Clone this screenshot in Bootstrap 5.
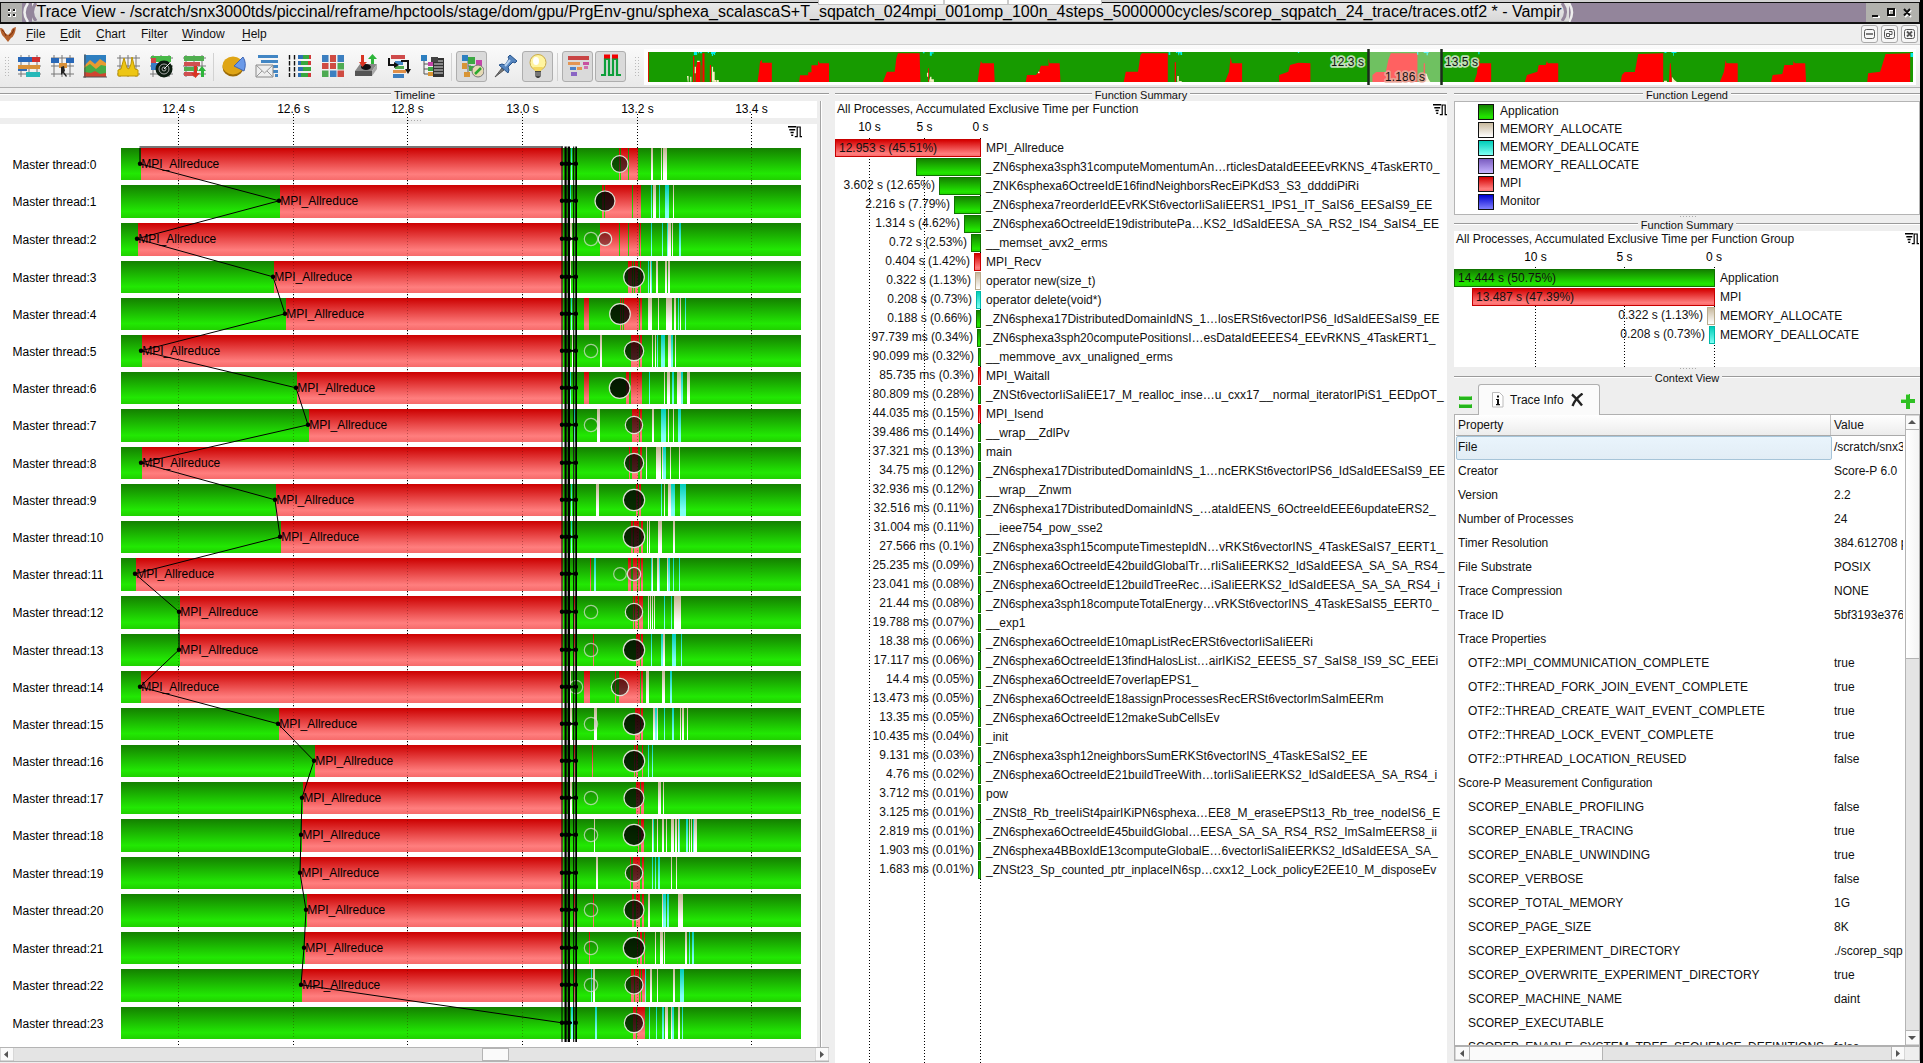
<!DOCTYPE html>
<html lang="en">
<head>
<meta charset="utf-8">
<title>Trace View - Vampir</title>
<link href="https://cdn.jsdelivr.net/npm/bootstrap@5.3.0/dist/css/bootstrap.min.css" rel="stylesheet">
<script src="https://cdn.jsdelivr.net/npm/bootstrap@5.3.0/dist/js/bootstrap.bundle.min.js"></script>
<style>
body{width:1923px;height:1063px;overflow:hidden;background:#000;font-family:"Liberation Sans",Arial,sans-serif;font-size:12px;line-height:14px;color:#111}
svg{display:block;flex:none}
.app{width:1920px;height:1063px;background:#eee}
.edge{height:3px;background:#d2d2d2;border-bottom:1px solid #111;position:relative}
.edge i{position:absolute;left:818px;top:0;width:284px;height:5px;background:linear-gradient(90deg,#fff 0 124px,#ccc 124px 126px,#fff 126px 188px,#ccc 188px 190px,#fff 190px);border:1px solid #c2c2c2;border-top:0;z-index:2}
.wtitle{height:21px;background:#93859b;border-bottom:2px solid #111;border-right:1px solid #111;border-left:1px solid #111}
.wtext{width:1537px;background:linear-gradient(#e9e9e9,#d8d8d8);font-size:16px;line-height:18px;white-space:nowrap;border-bottom:1px solid #b6b6b6}
.wbtn{background:#b1b1ad}
.menub{height:21px;border-bottom:1px solid #cfcfcf}
.menub u{text-underline-offset:2px}
.mdi{width:17px;height:18px;border:1px solid #aaa;border-radius:3px;background:#f6f6f6}
.tools{height:43px;padding-top:1px;background:linear-gradient(#fbfbfb,#e9e9e9);border-bottom:1px solid #b0b0b0}
.tb{width:33px;height:32px}
.tb.on div{border:1px solid #aeaeae;border-radius:3px;background:#dadada}
.tb div{width:31px;height:31px;border:1px solid transparent}
.vsep{width:1px;height:28px;background:#d2d2d2;margin:0 3px}
.ptitle{height:13px;font-size:11px;line-height:13px;gap:3px;padding-top:2px}
.ptitle:before,.ptitle:after{content:"";flex:1;height:2px;background:#9a9a9a;border-bottom:1px solid #fff;margin-top:-4px}
.sb{background:#e4e4e4}
.sbt{background:#fafafa;border:1px solid #b4b4b4}
.frow{height:19px}
.fname{padding-left:5px;white-space:nowrap;line-height:18px}
.bar{height:18px;border:1px solid;flex:none}
.val{line-height:16px;white-space:nowrap;margin-right:4px}
.cg{background:linear-gradient(#148200,#22e600 85%,#20d400);border-color:#0f7300}
.cr{background:linear-gradient(#d40000,#ff7d7d 85%,#fa6c6c);border-color:#c80000}
.cb{background:linear-gradient(#c8b99d,#fff);border-color:#b9aa8c}
.cc{background:linear-gradient(#00cdb9,#80fff4);border-color:#00b9a8}
.cp{background:linear-gradient(#7a5cc0,#c6b4ff);border-color:#6a50b0}
.cm{background:linear-gradient(#0000d0,#8080ff);border-color:#0000c0}
.lgb{height:114px;border:1px solid #b4b4b4;background:#fff}
.sw{width:16px;height:16px;border:1px solid;margin-right:6px}
.dots{position:absolute;top:0;bottom:0;width:1px;background:repeating-linear-gradient(#000 0 1px,transparent 1px 3px);z-index:0}
.prow{height:24px;line-height:23px;white-space:nowrap}
.pcell{width:376px;padding-left:2px}
.vcell{width:71px;overflow:hidden;padding-left:2px}
.sel{background:linear-gradient(#e9f4fc,#e2edf5);border:1px solid #a6c4d8;border-radius:2px;line-height:21px;padding-left:1px}
.over{position:relative;z-index:1}
.over .bar{opacity:.999}
</style>
</head>
<body>
<div class="app d-flex flex-column">
 <div class="edge flex-shrink-0"><i></i></div>
 <div class="wtitle d-flex flex-shrink-0">
  <div class="wbtn d-flex align-items-center justify-content-center" style="width:21px"><svg width="8" height="8"><path d="M0 0h3v3H0zM5 0h3v3H5zM0 5h3v3H0zM5 5h3v3H5z" fill="#fff"/><path d="M0 0h2v2H0zM5 0h2v2H5zM0 5h2v2H0zM5 5h2v2H5z" fill="#111"/></svg></div>
  <svg width="10" height="19"><path d="M6 0Q-1 9.500 6 19" fill="none" stroke="#eee" stroke-width="2.500"/></svg>
  <div class="wtext d-flex"><svg width="1537" height="18"><path d="M4 0Q-3 9 4 18" fill="none" stroke="#93859b" stroke-width="3"/><text x="4.500" y="14" font-size="16" textLength="1525" lengthAdjust="spacingAndGlyphs">Trace View - /scratch/snx3000tds/piccinal/reframe/hpctools/stage/dom/gpu/PrgEnv-gnu/sphexa_scalascaS+T_sqpatch_024mpi_001omp_100n_4steps_5000000cycles/scorep_sqpatch_24_trace/traces.otf2 * - Vampir</text><path d="M1530 0Q1537 9 1530 18" fill="none" stroke="#93859b" stroke-width="3"/></svg></div>
  <svg width="8" height="19"><path d="M0 0Q6 9.500 0 19" fill="none" stroke="#eee" stroke-width="2.500"/></svg>
  <div class="wbtn ms-auto" style="width:53px"><svg width="53" height="19" fill="none" stroke="#fff" stroke-width="2"><path d="M7 14h7M23 7h6v6h-6zM39 7l6 7m0-7l-6 7"/><g stroke="#111"><path d="M6 13h6M22 6h6v6h-6zM38 6l6 6.500m0-6.500l-6 6.500"/></g></svg></div>
 </div>
 <div class="menub d-flex align-items-center flex-shrink-0">
  <svg width="17" height="16"><path d="M0 2q4 0 5 5l3 2 3-3q0-4 5-5-1 9-5 11l-3 4-4-5Q1 9 0 2" fill="#b4602c"/><path d="M2 4q3 2 4 6M14 3q-1 5-5 7" stroke="#783010" fill="none"/></svg>
  <span style="width:34px;padding-left:9px"><u>F</u>ile</span><span style="width:37px;padding-left:9px"><u>E</u>dit</span><span style="width:44px;padding-left:8px"><u>C</u>hart</span><span style="width:42px;padding-left:9px">F<u>i</u>lter</span><span style="width:56px;padding-left:8px"><u>W</u>indow</span><span class="ps-2 ms-1"><u>H</u>elp</span>
  <div class="ms-auto d-flex" style="margin-right:2px;gap:3px">
   <div class="mdi"><svg width="15" height="16" fill="none" stroke="#555"><rect x="2.500" y="3.500" width="10" height="9" rx="2"/><path d="M4 8h7" stroke-width="1.500"/></svg></div>
   <div class="mdi"><svg width="15" height="16" fill="none" stroke="#555"><rect x="2.500" y="3.500" width="10" height="9" rx="2"/><path d="M4.500 7.500h3v3h-3zM7 5.500h3v3H8"/></svg></div>
   <div class="mdi"><svg width="15" height="16" fill="none" stroke="#555"><rect x="2.500" y="3.500" width="10" height="9" rx="2"/><path d="M5 5.500l5 5m0-5l-5 5" stroke-width="1.800"/></svg></div>
  </div>
 </div>
 <div class="tools d-flex align-items-center flex-shrink-0">
  <svg width="12" height="20"><path d="M5.500 0v20M8.500 0v20" stroke="#bbb" stroke-dasharray="1 2"/></svg>
  <div class="d-flex" id="tools"></div>
  <svg width="17" height="20"><path d="M8.500 0v20M11.500 0v20" stroke="#bbb" stroke-dasharray="1 2"/></svg>
  <svg id="overview" width="1272" height="38" viewBox="644 48 1272 38">
   <rect x="644" y="49" width="1272" height="36" fill="#fff"/><rect x="648" y="52" width="1265" height="30" fill="#179b00"/>
   <g transform="translate(640 0) scale(.4082 .33333)">
    <path fill="#f00" d="M20 156h2v90h-2zM130 168h3v78h-3zM136 246v-30l4-32h8v62zM150 246v-50h1v50zM153 160h5v86h-5zM171 195h3v51h-3zM288 246l4-36 2-25 5-6v9h24v58zM390 246l2-20h20v-9h8v-21h16v-14l4 8h23v56zM595 246l10-31h19l4-40 4-15h53l2 86zM706 205h2v40h-2zM827 246l4-36 4-27 3 7h29l2 56zM945 246l3-21h22l8-12 4-16h19v-22l2 15h25l2 56zM1185 246l5-31h30l6-50 4-5h63v86zM1310 187h3v59h-3zM1433 246l10-31 4-45 3 20h25v56z"/>
    <path fill="#f7efc4" d="M115 228h4v17h-2zM123 230h3v15h-3zM134 200h3v20h-3zM140 182h6v4h-6zM176 245v-45h3v15h4v25h4v6zM188 240h5v6h-5zM703 218h3v12h-3zM708 245l3-15h3v8h6v8zM1316 245v-17h4v15h7v3zM975 215h4v5h-4z"/>
    <path fill="#00ece6" d="M132 156h8v9h-8zM142 156h3v4h-3zM147 156h5v4h-5zM166 156h3v3h-3zM174 156h12v3h-2v6h-3v-3h-2v6h-3v-6h-2zM693 156h4v4h-4zM710 156h5v11h-5zM716 156h3v5h-3zM1295 156h4v9h-4zM1313 156h3v3h-3zM1317 156h11v9h-4v-5h-3v6h-2z"/>
   </g>
   <g transform="translate(1270 0) scale(.4165 .33333)">
    <path fill="#f00" d="M22 246v-21l22-10 4-20 20-7 29 2v56zM246 246v-21l9-9h23l6-36 6-20h64v86zM369 190h3v56h-3zM490 246l7-26 4-50 3 20h27v56zM612 246l5-21 25-10 3-20h17l3-12 2 7h25v56zM842 246l3-21 7-9h24l8-54 60-2v86zM958 246l2-56h2l3 56zM1080 246l10-31 4-35 2 10h27v56zM1203 246l4-21 23-3 5-27h21l1-12 3 7h25l2 56zM1434 246l2-26 29-5 13-53 59-2v86z"/>
    <path fill="#f7efc4" d="M371 246v-25h5l4 15 5 10zM946 242h7v4h-7zM965 246v-16l6 10 6 6z"/>
    <path fill="#00ece6" d="M353 156h3v8h-3zM369 156h12v3h-2v7h-3v-7h-7zM500 156h3v7h-3zM67 156h3v3h-3zM947 156h5v3h-5zM964 156h12v3h-6v8h-2v-8h-4zM1538 159h6v12h-6z"/>
   </g>
   <rect x="1369" y="52" width="72" height="30" fill="#fff" opacity=".38"/><path d="M1368.500 49v36M1441.500 49v36" stroke="#1d2b1d" stroke-width="2.500"/>
   <g font-size="12" fill="#111" stroke="#cfe8ca" stroke-width="3.500" stroke-opacity=".9" paint-order="stroke" stroke-linejoin="round"><text x="1331" y="65.500" textLength="33">12.3 s</text><text x="1445" y="65.500" textLength="33">13.5 s</text><text x="1385" y="80.500" textLength="40" stroke="#e8a79a">1.186 s</text></g>
  </svg>
 </div>
 <div class="d-flex flex-grow-1" style="min-height:0">
  <section class="d-flex flex-column" style="width:829px">
   <div class="ptitle d-flex align-items-center">Timeline</div>
   <div class="d-flex">
    <svg id="timeline" width="820" height="946" viewBox="0 101 820 946"></svg>
    <div style="width:2px;height:946px;background:#a4a4a4;border-right:1px solid #fff"></div>
   </div>
   <div class="d-flex sb" style="width:829px;height:15px;border-top:1px solid #b4b4b4;border-bottom:1px solid #b4b4b4">
    <svg width="14" height="13"><path d="M14 0v13H0V0" fill="#fafafa" stroke="#b4b4b4"/><path d="M8 3v7L4 6.500z" fill="#555"/></svg>
    <div class="sbt" style="width:27px;margin-left:468px"></div>
    <svg class="ms-auto" width="14" height="13"><path d="M0 0v13h14V0" fill="#fafafa" stroke="#b4b4b4"/><path d="M5 3v7l4-3.500z" fill="#555"/></svg>
   </div>
  </section>
  <section class="d-flex flex-column" style="width:612px;margin-left:6px">
   <div class="ptitle d-flex align-items-center">Function Summary</div>
   <div class="bg-white flex-grow-1 position-relative" style="overflow:hidden">
    <div class="d-flex justify-content-between" style="padding:1px 0 0 2px;height:20px"><span>All Processes, Accumulated Exclusive Time per Function</span><svg style="margin-top:2px" width="14" height="12"><use href="#mark"/></svg></div>
    <svg width="170" height="18" font-size="12" text-anchor="middle"><text x="34.500" y="10">10 s</text><text x="89.500" y="10">5 s</text><text x="145.500" y="10">0 s</text></svg>
    <i class="dots" style="left:34px;top:37px"></i><i class="dots" style="left:89px;top:37px"></i><i class="dots" style="left:145px;top:37px"></i>
    <div id="funcs" class="over"></div>
   </div>
  </section>
  <section class="d-flex flex-column" style="width:466px;margin-left:7px">
   <div class="ptitle d-flex align-items-center">Function Legend</div>
   <div class="lgb" id="legend" style="padding:1px 0 0 23px"></div>
   <svg width="466" height="4"><path d="M226 1.500h18" stroke="#aaa" stroke-dasharray="1 2"/></svg>
   <div class="ptitle d-flex align-items-center" style="height:12px">Function Summary</div>
   <div class="bg-white position-relative" style="height:136px">
    <div class="d-flex justify-content-between" style="padding:1px 1px 0 2px;height:19px"><span>All Processes, Accumulated Exclusive Time per Function Group</span><svg style="margin-top:1px" width="14" height="12"><use href="#mark"/></svg></div>
    <svg width="300" height="19" font-size="12" text-anchor="middle"><text x="81.500" y="11">10 s</text><text x="170.500" y="11">5 s</text><text x="260" y="11">0 s</text></svg>
    <i class="dots" style="left:81px;top:36px"></i><i class="dots" style="left:170px;top:36px"></i><i class="dots" style="left:260px;top:36px"></i>
    <div id="groups" class="over"></div>
   </div>
   <svg width="466" height="5"><path d="M226 1.500h18" stroke="#aaa" stroke-dasharray="1 2"/></svg>
   <div class="ptitle d-flex align-items-center" style="height:12px">Context View</div>
   <div class="d-flex" style="height:31px;border-bottom:1px solid #b0b0b0">
    <svg width="24" height="31"><path d="M5 12h13v4H5zM5 20h13v4H5z" fill="#25b51b"/><path d="M5.500 12.500h12M5.500 20.500h12" stroke="#8ce07e"/></svg>
    <div class="d-flex align-items-center" style="width:122px;height:31px;background:#fbfbfb;border:1px solid #b0b0b0;border-bottom:0;border-radius:3px 3px 0 0;padding:0 15px 0 13px">
     <svg width="12" height="16"><path d="M.5.500h7l3.500 3.500v11H.5z" fill="#fff" stroke="#bbb"/><path d="M5 3.500h2v2H5zM4 7h3v5h1v1.200H4V12h1V8H4z" fill="#111"/></svg><span class="flex-grow-1" style="padding-left:6px">Trace Info</span>
     <svg width="13" height="14"><path d="M1 1.500q5 4 10 11M11.500.500Q4 6 1.500 13" fill="none" stroke="#222" stroke-width="2.300"/></svg>
    </div>
    <svg class="ms-auto me-1" width="16" height="31"><path d="M6 10h4v5h5v4h-5v6H6v-6H1v-4h5z" fill="#2fc023"/><path d="M6 10.500h3M1 15.500h5" stroke="#95e888"/></svg>
   </div>
   <div class="d-flex flex-grow-1 bg-white" style="border:1px solid #b0b0b0;border-top:0;min-height:0;max-height:632px;height:632px;overflow:hidden;padding-left:1px">
    <div style="width:449px;overflow:hidden">
     <div class="d-flex prow" style="height:21px;line-height:20px;background:linear-gradient(#fff,#ececec);border-bottom:1px solid #aaa"><span class="pcell" style="width:375px;border-right:1px solid #c4c4c4">Property</span><span class="vcell" style="padding-left:3px">Value</span></div>
     <div id="props"></div>
    </div>
    <div class="d-flex flex-column sb flex-shrink-0" style="width:14px;border-left:1px solid #b4b4b4">
     <svg width="14" height="15"><path d="M0 0h14v14.500H0" fill="#fafafa" stroke="#b4b4b4"/><path d="M2 9h8L6 5z" fill="#555"/></svg>
     <div style="height:229px;background:linear-gradient(90deg,#fff,#f4f4f4);border-bottom:1px solid #b4b4b4"></div>
     <svg class="mt-auto" width="14" height="15"><path d="M0 .5h14V15H0" fill="#fafafa" stroke="#b4b4b4"/><path d="M2 6h8l-4 4z" fill="#555"/></svg>
    </div>
   </div>
   <div class="d-flex sb flex-shrink-0" style="height:15px;border:1px solid #b0b0b0">
    <svg width="15" height="13"><path d="M14.500 0v13H0V0" fill="#fafafa" stroke="#b4b4b4"/><path d="M9 3v7L5 6.500z" fill="#555"/></svg>
    <div style="width:133px;background:#fafafa;border-right:1px solid #b4b4b4"></div>
    <svg class="ms-auto" width="28" height="13"><path d="M.5 0v13h13.500V0" fill="#fafafa" stroke="#b4b4b4"/><path d="M14 0h14v13H14z" fill="#eee"/><path d="M5 3v7l4-3.500z" fill="#555"/></svg>
   </div>
   <div style="height:2px;flex:none"></div>
  </section>
 </div>
</div>
<svg width="0" height="0" style="position:absolute"><defs>
 <g id="mark"><path d="M0 .7h8.300M1.300 3.700h5.900M2.500 6.500h3.200M3.200 9.200h2" stroke="#000" stroke-width="1.500"/><path d="M6.800 10.700h2.400V1h3v9.700H14" fill="none" stroke="#000" stroke-width="1.200"/></g>
 <linearGradient id="gg" x2="0" y2="1"><stop stop-color="#148000"/><stop offset=".8" stop-color="#22e803"/><stop offset="1" stop-color="#20d000"/></linearGradient>
 <linearGradient id="gr" x2="0" y2="1"><stop stop-color="#cc0000"/><stop offset=".82" stop-color="#ff7e7e"/><stop offset="1" stop-color="#f66a6a"/></linearGradient>
 <linearGradient id="gb" x2="0" y2="1"><stop stop-color="#c4b594"/><stop offset=".8" stop-color="#fff"/></linearGradient>
 <linearGradient id="gc" x2="0" y2="1"><stop stop-color="#00ccb8"/><stop offset=".8" stop-color="#80fff4"/></linearGradient>
</defs></svg>
<script>
/* toolbar icons */
const grid='<path d="M4 1v22M12 1v22M20 1v22M1 4h23M1 12h23M1 20h23" stroke="#777" stroke-width="1"/>';
const icons=[
 grid+'<path fill="#2868b8" d="M1 3h14v5H1z"/><path fill="#d03030" d="M15 3h8v5h-8z"/><path fill="#d8913a" d="M1 11h22v4H1z"/><path fill="#306ab4" d="M1 15h9v2H1z"/><path fill="#26b8b8" d="M9 18h14v5H9z"/>',
 grid+'<path fill="#2868b8" d="M1 4h8v5H1zM16 4h8v5h-8z"/><path fill="#d8913a" d="M9 9h8v5H9z"/><path fill="#222" d="M11 13l3-1 1 5-1 1 3 4-1 1-3-4-2 2z"/>',
 '<path fill="#2e7fc0" d="M1 1h22v22H1z"/><path fill="#e89a30" d="M1 12l6-6 5 4 5-5 6 4v14H1z"/><path fill="#46ab46" d="M1 14l6-4 6 5 5-4 5 1v11H1z"/><path fill="#d04530" d="M1 18l7 1 4-2 5 3 6-1v4H1z"/>'+'<path d="M2 0v24M0 23h24" stroke="#555"/>',
 grid+'<path fill="#edc614" stroke="#bd9400" d="M2 22v-6l3-1 3-11 3 10 2 1 2-5 1-7 3 12 3 1v6z"/>',
 grid+'<path fill="#47b847" d="M2 2h20v6H2z"/><path fill="#d04545" d="M2 4h5v5H2z"/><path fill="#377dc4" d="M2 9h11v7H2z"/><circle cx="15" cy="15" r="8.500" fill="#0c1c10"/><g fill="none" stroke="#aaa"><circle cx="15" cy="15" r="5"/><circle cx="15" cy="15" r="2"/><path d="M15 15l6-6" stroke="#eee"/></g>',
 grid+'<path fill="#4fae4f" d="M2 2h20v5H2zM2 13h14v4H2z"/><path fill="#cf5050" d="M2 8h16v4H2zM2 18h12v4H2z"/><path fill="#d93422" d="M12 12h3v7h3l-4.500 5L9 19h3z"/><path fill="#2db53a" d="M19 23h3v-6h2l-4-5-4 5h3z"/>',0,
 '<ellipse cx="11" cy="13" rx="10.500" ry="9.500" fill="#9c6b05"/><ellipse cx="11" cy="11.500" rx="10.500" ry="9" fill="#dfa516"/><path d="M12 12l9-9q4 6 1 14z" fill="#6b9ae8" stroke="#3f65b3"/>',
 '<path fill="#4286c4" d="M3 1h20v3H3zM6 6h17v3H6zM10 11h13v3H10zM17 16h6v3h-6zM20 20h3v3h-3z"/><path fill="#eee" stroke="#888" d="M1 11h17v12H1z"/><path d="M1 11l8.500 8 8.500-8M1 23l6-6M18 23l-6-6" fill="none" stroke="#999"/>',
 '<g fill="none" stroke="#111" stroke-width="1.400"><path d="M1.500 1v22M6.500 1v22" stroke-dasharray="4.500 1.500"/></g><path fill="#2f6fb5" d="M10 1h5v4h-5zM10 7h3v4h-3zM10 13h5v4h-5zM10 19h3v4h-3z"/><path fill="#36a83f" d="M15 1h8v4h-8zM13 7h7v4h-7zM15 13h8v4h-8zM13 19h8v4h-8z"/><path fill="#d03a3a" d="M21 1h2v4h-2zM20 7h3v4h-3zM20 19h3v4h-3z"/>',
 '<path fill="#3c7fc0" d="M1 1h7v7H1zM16 1h7v7h-7zM9 16h7v7H9z"/><path fill="#cf4b42" d="M9 1h6v7H9zM1 8h7v7H1zM16 16h7v7h-7zM9 9h6v6H9z"/><path fill="#4eab53" d="M16 8h7v8h-7zM1 16h7v7H1z"/><path d="M8 1v22M16 1v22M1 8.500h22M1 16h22" stroke="#eee"/>',
 '<path fill="#888" d="M1 17l5-7h17l-5 7z"/><path fill="#555" d="M1 17h17v5H1z"/><path fill="#aaa" d="M18 17l5-7v5l-5 7z"/><ellipse cx="12" cy="13" rx="5" ry="3" fill="#111"/><path fill="#d93422" d="M7 1h3v7h3l-4.500 5L5 8h2z"/><path fill="#2db53a" d="M17 10h3V5h3l-4.500-5L14 5h3z"/>',
 '<path fill="#cf4b4b" d="M4 1h14v4H4z"/><path fill="#4286c4" d="M8 7h8v4H8z"/><path fill="#52ad52" d="M8 12h9v3H8z"/><path fill="#e09048" d="M6 16h13v3H6z"/><path fill="#3c7fc0" d="M6 20h11v4H6z"/><path d="M2 4v7h8M14 7h7v9" fill="none" stroke="#111" stroke-width="2"/><path d="M7 8l5 3-5 3zM18 15h6l-3 5z" fill="#111"/>',
 '<path fill="#2d7fc0" d="M1 1h6v6H1z"/><path fill="#c445a8" d="M8 8h5v4H8z"/><path fill="#3ca843" d="M8 13h5v4H8z"/><path fill="#d89434" d="M8 18h5v4H8z"/><path d="M4 7v13h4M4 10h4M4 15h4" stroke="#555" fill="none"/><path d="M13 4h11v19H13z" fill="#333"/><path d="M14 7h9M14 10h9M14 13h9M14 16h9M14 19h9" stroke="#ddd"/><path d="M11 3h7v5h-7z" fill="#444"/>',0,
 '*<path d="M5 4h3v17M8 12h3" stroke="#666" fill="none"/><path fill="#2d7fc0" d="M2 1h6v6H2z"/><path fill="#3ca843" d="M8 3h7v7H8zM9 12h5v5H9z"/><path fill="#c445a8" d="M16 6h6v6h-6z"/><path fill="#d89434" d="M2 9h5v6H2zM4 18h6v5H4z"/><circle cx="18" cy="17" r="6" fill="#e5d9b4" stroke="#777"/><path d="M15 20l6-6" stroke="#2aa92f" stroke-width="2.500"/>',
 '<path d="M2 23l7-9 2 2z" fill="#777" stroke="#555"/><path d="M6 11q3-2 6 0l4-6-1-2 2-2 7 6-2 2-2-1-5 5q2 3 0 6z" fill="#5585bf" stroke="#27548c"/><path d="M12 12l5-6" stroke="#b5d1f0" stroke-width="2"/>',
 '*<circle cx="12" cy="8.500" r="8" fill="#fff4a0" stroke="#c9aa48"/><path d="M7 13h10l-2 4H9z" fill="#f4d860"/><ellipse cx="10" cy="7" rx="3" ry="4" fill="#fff"/><path d="M9 17h6v5l-2 2h-2l-2-2z" fill="#444"/><path d="M9 19h6M9 21h6" stroke="#aaa"/>',0,
 '*<path fill="#c94545" d="M2 2h21v4H2z"/><path fill="#e39554" d="M2 8h12v3H2z"/><path fill="#c850a0" d="M17 8h6v3h-6z"/><path fill="#4a80c8" d="M4 13h6v3H4z"/><path fill="#d070b0" d="M18 12h4v3h-4z"/><path fill="#e39554" d="M11 13h5v3h-5z"/><path fill="#8a65c4" d="M5 18h6v4H5z"/>',
 '*<path d="M2 21h4V5h4v16h4V5h4v16h4" fill="none" stroke="#0d9f3a" stroke-width="2.200"/><path d="M5 2.500h6M13 2.500h6" stroke="#f20000" stroke-width="4"/>'];
document.getElementById('tools').innerHTML=icons.map(s=>s===0?'<div class="vsep align-self-center"></div>':`<div class="tb d-flex justify-content-center ${s[0]=='*'?'on':''}"><div class="d-flex align-items-center justify-content-center"><svg width="24" height="24">${s.replace('*','')}</svg></div></div>`).join('');

/* timeline: strips are in thirds of a pixel from x=530 (r red, b allocate, c deallocate, g application) */
const Y=[148,185,223,261,298,335,372,409,447,484,521,558,596,634,671,708,745,782,819,857,894,932,969,1007];
const S=[141,280,138,274,286,142,297,309,142,276,281,136,180,180,141,279,315,303,302,301,307,305,302,0];
const T=[
'c123-126 r267-324 g270-273 g294-297 b363-369 b393-396 b399-411',
'c120-123 r216-333 g222-225 g306-309 c363-366 b369-378 c387-390 c405-417 b429-432',
'b120-126 r210-333 g267-270 g294-297 g327-330 c363-366 c396-399 c411-414 b414-423 b426-429 c447-453',
'b120-123 r294-333 g306-309 g312-315 g324-330 c354-357 b360-363 c363-366 b378-384 b405-411 b414-420',
'c123-126 b129-131 r162-177 r270-336 g273-276 g279-282 g327-330 b354-366 b384-387 b408-426 b432-438 c444-447 b450-453 c465-468',
'b126-129 b210-216 r303-336 g327-330 b366-369 b375-378 c381-384 c393-405 b414-423 c423-429 b435-438',
'c120-123 r162-177 r288-297 r303-336 c357-360 b402-405 b411-420 c426-432 b441-453 c453-459 b471-480',
'c132-135 b201-210 r306-336 g327-330 b366-372 c393-396 c396-408 b414-417 b429-432 c444-453',
'b129-131 r297-300 r306-336 g324-330 b348-351 b378-393 b396-399 c399-408 b420-423 b447-450',
'c123-126 b198-207 r318-333 g324-327 c393-396 b402-405 b414-423 c423-435 c450-468',
'c123-126 r303-339 g309-312 g327-333 b351-354 b357-360 b384-396 b429-435',
'r180-183 c192-198 r294-303 r309-339 g321-324 g330-333 c363-366 b366-369 b381-387 c387-390 b411-414 c414-420 c429-432 c447-450',
'r132-135 r309-339 g312-315 g324-327 b354-357 b360-363 b366-369 b372-375 c402-405 c423-426 b432-453',
'r132-135 r189-192 r318-339 g330-333 c363-366 c393-399 b399-405 c426-438 c453-456',
'b120-123 r162-180 r255-258 r267-339 g330-333 b348-357 b396-405 c420-426',
'b120-126 b192-201 r315-339 g330-333 b369-375 c375-381 b381-384 c402-405 c426-432 b450-453 b456-462 b471-474',
'r132-135 r186-189 r312-315 r318-324 r336-339 c354-357 c366-369',
'b120-126 r318-342 g330-333 b384-393 b399-402',
'b192-195 r324-327 r333-342 b366-369 c369-372 b381-384 b396-402 b408-411 b423-432 b435-441 b444-447 c447-450 c468-474 b477-480 b483-486 c489-492 b492-501',
'b198-204 r300-303 r309-342 g330-336 c366-369 c375-378 c384-390 b423-426 b438-441',
'r132-135 r189-192 r306-312 r318-342 g330-336 b354-360 b396-399 c399-408 c411-417 b444-459',
'r177-180 r321-324 r330-336 r342-345 b375-378 b390-399 b402-405 b465-471 c477-480 c486-492',
'r132-135 c183-186 b189-195 r303-345 g312-315 g327-330 g333-336 c345-348 b360-366 b381-384 b429-435 c450-462',
'c123-129 c195-201 r309-345 g318-321 c357-360 c378-381 c396-402 b405-414 b423-426 c426-432 b444-450 c456-459'];
const C=['269,25,.6','225,30,.83','183,20,.1 225,20,.35','312,31,.78','270,31,.82','183,20,.1 312,29,.72','269,31,.85','183,20,.1 312,26,.58','312,29,.72','312,32,.8','312,32,.8','270,19,.12 312,20,.3','183,20,.1 312,26,.6','183,20,.15 312,32,.82','138,20,.2 270,26,.55','183,20,.1 312,32,.82','312,32,.82','183,20,.1 312,30,.76','183,20,.15 312,32,.82','312,26,.6','183,20,.1 312,30,.76','183,20,.12 312,32,.82','183,20,.15 312,27,.65','312,29,.72'];
const R=(x,y,w,h,f)=>`<rect x="${x.toFixed(2)}" y="${y}" width="${w.toFixed(2)}" height="${h}" fill="${f}"/>`;
let o=R(0,101,817,17,'#fff')+R(0,124,817,923,'#fff')+R(408,119,13,4,'#eee')+'<path d="M408 120.500h14" stroke="#aaa" stroke-dasharray="1 2"/>';
const ticks=[[178.5,'12.4 s'],[293.5,'12.6 s'],[407.5,'12.8 s'],[522.5,'13.0 s'],[637.5,'13.2 s'],[751.5,'13.4 s']];
ticks.forEach(t=>o+=`<text x="${t[0]}" y="113" text-anchor="middle">${t[1]}</text><path d="M${t[0]} 114V1047" stroke="#000" stroke-dasharray="1 2"/>`);
Y.forEach((y,i)=>{
 const h=i<23?Y[i+1]-y-5:32;
 o+=R(121,y,680,h,'url(#gg)');
 if(S[i])o+=R(S[i],y,562.7-S[i],h,'url(#gr)');
 T[i].split(' ').forEach(s=>{const [a,b]=s.slice(1).split('-').map(Number);o+=R(530+a/3,y,(b-a)/3,h,`url(#g${s[0]})`)});
 o+=`<text x="12.500" y="${y+21}" textLength="${i<10?84:91}">Master thread:${i}</text>`;
});
ticks.forEach(t=>o+=`<path d="M${t[0]} 148V1039" stroke="#300" opacity=".3" stroke-dasharray="1 2"/>`);
Y.forEach((y,i)=>{
 C[i].split(' ').forEach(c=>{const [x,r,a]=c.split(',').map(Number);o+=`<circle cx="${530+x/3}" cy="${y+16}" r="${r/3}" fill="#000" fill-opacity="${a}" stroke="#dde2d4" stroke-width="1.200" stroke-opacity="${a<.3?.7:1}"/>`});
 const cy=y+15.8;
 if(S[i])o+=`<circle cx="${S[i]-1}" cy="${cy}" r="2.200"/><text x="${S[i]+.3}" y="${y+20}" textLength="78">MPI_Allreduce</text>`;
 o+=`<path d="M560 ${cy}h${i==23?12:18}" stroke="#000" stroke-width="2"/>`;
 [562,566,569,575.8].forEach(x=>o+=`<circle cx="${x}" cy="${cy}" r="2.200"/>`);
});
o+=`<polyline points="${Y.map((y,i)=>(S[i]?S[i]-1:562)+','+(y+15.8)).join(' ')}" fill="none" stroke="#000" stroke-width="1"/>`;
o+='<path d="M140 148v15" stroke="#000" stroke-opacity=".6" stroke-width="1.800"/><path d="M139.500 147H563" stroke="#777" stroke-width="2"/>';
o+='<g stroke="#000"><path d="M562 146.500V1042" stroke-width="2" opacity=".5"/><path d="M565.500 146.500V1042M569 146.500V1042" stroke-width="2"/><path d="M567 146.500V1042" stroke-width="1" opacity=".7"/><path d="M573.500 146.500V1042" stroke-width="1" opacity=".8"/><path d="M575 146.500V1042" stroke-width="1" opacity=".4"/><path d="M576.200 146.500V1042" stroke-width="1.600"/></g><g transform="translate(788 126)"><use href="#mark"/></g>';
document.getElementById('timeline').innerHTML='<g font-size="12">'+o+'</g>';

/* function summary */
const F=[['12.953 s (45.51%)',146,'r','MPI_Allreduce'],['',65,'g','_ZN6sphexa3sph31computeMomentumAn…rticlesDataIdEEEEvRKNS_4TaskERT0_'],['3.602 s (12.65%)',42,'g','_ZNK6sphexa6OctreeIdE16findNeighborsRecEiPKdS3_S3_ddddiPiRi'],['2.216 s (7.79%)',27,'g','_ZN6sphexa7reorderIdEEvRKSt6vectorIiSaIiEERS1_IPS1_IT_SaIS6_EESaIS9_EE'],['1.314 s (4.62%)',17,'g','_ZN6sphexa6OctreeIdE19distributePa…KS2_IdSaIdEESA_SA_RS2_IS4_SaIS4_EE'],['0.72 s (2.53%)',10,'g','__memset_avx2_erms'],['0.404 s (1.42%)',7,'r','MPI_Recv'],['0.322 s (1.13%)',6,'b','operator new(size_t)'],['0.208 s (0.73%)',5,'c','operator delete(void*)'],['0.188 s (0.66%)',5,'g','_ZN6sphexa17DistributedDomainIdNS_1…losERSt6vectorIPS6_IdSaIdEESaIS9_EE'],['97.739 ms (0.34%)',4,'g','_ZN6sphexa3sph20computePositionsI…esDataIdEEEES4_EEvRKNS_4TaskERT1_'],
...`90.099 ms (0.32%)|__memmove_avx_unaligned_erms
85.735 ms (0.3%)|MPI_Waitall
80.809 ms (0.28%)|_ZNSt6vectorIiSaIiEE17_M_realloc_inse…u_cxx17__normal_iteratorIPiS1_EEDpOT_
44.035 ms (0.15%)|MPI_Isend
39.486 ms (0.14%)|__wrap__ZdlPv
37.321 ms (0.13%)|main
34.75 ms (0.12%)|_ZN6sphexa17DistributedDomainIdNS_1…ncERKSt6vectorIPS6_IdSaIdEESaIS9_EE
32.936 ms (0.12%)|__wrap__Znwm
32.516 ms (0.11%)|_ZN6sphexa17DistributedDomainIdNS_…ataIdEENS_6OctreeIdEEE6updateERS2_
31.004 ms (0.11%)|__ieee754_pow_sse2
27.566 ms (0.1%)|_ZN6sphexa3sph15computeTimestepIdN…vRKSt6vectorINS_4TaskESaIS7_EERT1_
25.235 ms (0.09%)|_ZN6sphexa6OctreeIdE42buildGlobalTr…rIiSaIiEERKS2_IdSaIdEESA_SA_SA_RS4_
23.041 ms (0.08%)|_ZN6sphexa6OctreeIdE12buildTreeRec…iSaIiEERKS2_IdSaIdEESA_SA_SA_RS4_i
21.44 ms (0.08%)|_ZN6sphexa3sph18computeTotalEnergy…vRKSt6vectorINS_4TaskESaIS5_EERT0_
19.788 ms (0.07%)|__exp1
18.38 ms (0.06%)|_ZN6sphexa6OctreeIdE10mapListRecERSt6vectorIiSaIiEERi
17.117 ms (0.06%)|_ZN6sphexa6OctreeIdE13findHalosList…airIKiS2_EEES5_S7_SaIS8_IS9_SC_EEEi
14.4 ms (0.05%)|_ZN6sphexa6OctreeIdE7overlapEPS1_
13.473 ms (0.05%)|_ZN6sphexa6OctreeIdE18assignProcessesRecERSt6vectorImSaImEERm
13.35 ms (0.05%)|_ZN6sphexa6OctreeIdE12makeSubCellsEv
10.435 ms (0.04%)|_init
9.131 ms (0.03%)|_ZN6sphexa3sph12neighborsSumERKSt6vectorINS_4TaskESaIS2_EE
4.76 ms (0.02%)|_ZN6sphexa6OctreeIdE21buildTreeWith…torIiSaIiEERKS2_IdSaIdEESA_SA_RS4_i
3.712 ms (0.01%)|pow
3.125 ms (0.01%)|_ZNSt8_Rb_treeIiSt4pairIKiPN6sphexa…EE8_M_eraseEPSt13_Rb_tree_nodeIS6_E
2.819 ms (0.01%)|_ZN6sphexa6OctreeIdE45buildGlobal…EESA_SA_SA_RS4_RS2_ImSaImEERS8_ii
1.903 ms (0.01%)|_ZN6sphexa4BBoxIdE13computeGlobalE…6vectorIiSaIiEERKS2_IdSaIdEESA_SA_
1.683 ms (0.01%)|_ZNSt23_Sp_counted_ptr_inplaceIN6sp…cxx12_Lock_policyE2EE10_M_disposeEv`.split('\n').map(l=>{const [v,n]=l.split('|');return [v,3,n.startsWith('MPI_')?'r':'g',n]})];
const rows=(d,w)=>d.map(([v,b,c,n])=>`<div class="d-flex frow"><div class="d-flex justify-content-end" style="width:${w}px">${b>100?'':`<span class="val">${v}</span>`}<div class="bar c${c}" style="width:${b}px">${b>100?`<span class="val" style="padding-left:3px">${v}</span>`:''}</div></div><span class="fname">${n}</span></div>`).join('');
document.getElementById('funcs').innerHTML=rows(F,146);
document.getElementById('groups').innerHTML=rows([['14.444 s (50.75%)',261,'g','Application'],['13.487 s (47.39%)',243,'r','MPI'],['0.322 s (1.13%)',8,'b','MEMORY_ALLOCATE'],['0.208 s (0.73%)',6,'c','MEMORY_DEALLOCATE']],261);
document.getElementById('legend').innerHTML=['gApplication','bMEMORY_ALLOCATE','cMEMORY_DEALLOCATE','pMEMORY_REALLOCATE','rMPI','mMonitor'].map(s=>`<div class="d-flex" style="height:18px;line-height:15px;padding-top:1px"><span class="sw c${s[0]}"></span>${s.slice(1)}</div>`).join('');
document.getElementById('props').innerHTML=`File|/scratch/snx3000tds
Creator|Score-P 6.0
Version|2.2
Number of Processes|24
Timer Resolution|384.612708 ps
File Substrate|POSIX
Trace Compression|NONE
Trace ID|5bf3193e376
Trace Properties|
>OTF2::MPI_COMMUNICATION_COMPLETE|true
>OTF2::THREAD_FORK_JOIN_EVENT_COMPLETE|true
>OTF2::THREAD_CREATE_WAIT_EVENT_COMPLETE|true
>OTF2::THREAD_LOCK_EVENT_COMPLETE|true
>OTF2::PTHREAD_LOCATION_REUSED|false
Score-P Measurement Configuration|
>SCOREP_ENABLE_PROFILING|false
>SCOREP_ENABLE_TRACING|true
>SCOREP_ENABLE_UNWINDING|true
>SCOREP_VERBOSE|false
>SCOREP_TOTAL_MEMORY|1G
>SCOREP_PAGE_SIZE|8K
>SCOREP_EXPERIMENT_DIRECTORY|./scorep_sqpatch
>SCOREP_OVERWRITE_EXPERIMENT_DIRECTORY|true
>SCOREP_MACHINE_NAME|daint
>SCOREP_EXECUTABLE|
>SCOREP_ENABLE_SYSTEM_TREE_SEQUENCE_DEFINITIONS|false`.split('\n').map((l,i)=>{const [n,v]=l.split('|'),k=n[0]=='>';return `<div class="d-flex prow"><span class="pcell ${i?'':'sel'}"${k?' style="padding-left:12px"':''}>${n.replace('>','')}</span><span class="vcell">${v}</span></div>`}).join('');
</script>
</body>
</html>
